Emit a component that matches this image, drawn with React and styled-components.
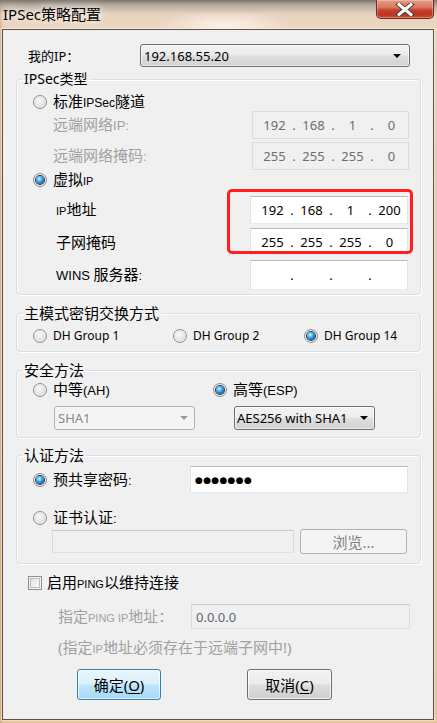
import React from 'react';
import styled, { createGlobalStyle } from 'styled-components';

const GlobalStyle = createGlobalStyle`
  html, body { margin: 0; padding: 0; }
  body {
    width: 437px; height: 723px; overflow: hidden;
    font-family: "Noto Sans", "Noto Sans CJK SC", sans-serif;
    background:
      linear-gradient(180deg, rgba(118,112,108,0.95) 0px, rgba(150,140,132,0.6) 5px, rgba(220,205,190,0) 14px),
      radial-gradient(ellipse 70px 14px at 225px 25px, rgba(255,244,232,0.95), rgba(255,244,232,0)),
      linear-gradient(90deg, rgba(190,120,80,0.35) 0px, rgba(190,120,80,0) 3px),
      linear-gradient(180deg, #e4d2c0 0, #ead5bf 28px, #e7c9a9 200px, #e5c39f 723px);
  }
  * { box-sizing: border-box; }
`;

const Window = styled.div`
  width: 437px; height: 723px;
  display: flex; flex-direction: column;
`;

const TitleBar = styled.div`
  height: 29px; flex: none;
  display: flex; justify-content: space-between; align-items: flex-start;
`;

const Title = styled.div`
  padding-left: 3px;
  font-size: 15px; line-height: 28px; color: #000;
  text-shadow: 0 0 6px rgba(255,255,255,0.9), 0 0 12px rgba(255,255,255,0.7);
`;

const CloseButton = styled.div`
  width: 58px; height: 19px; margin-right: 3px;
  border: 1px solid #6e2a1f; border-top: none; border-radius: 0 0 5px 5px;
  background: linear-gradient(180deg, #e49a86 0%, #d97a62 40%, #c8402a 56%, #bb3420 80%, #cc5034 100%);
  box-shadow: inset 0 0 0 1px rgba(255,255,255,0.3);
  display: flex; align-items: center; justify-content: center;
`;

const Client = styled.div`
  margin-left: 2px; width: 432px; height: 691px;
  border: 1px solid #5a5148; background: #f0f0f0;
  box-shadow: 0 0 0 1px rgba(255,255,255,0.45);
  display: flex; flex-direction: column;
`;

const MyIpRow = styled.div`
  margin-top: 14px; height: 23px; padding-left: 25px;
  display: flex; align-items: center;
`;

const Label = styled.span`
  flex: ${p => (p.$w ? `0 0 ${p.$w}px` : '0 1 auto')};
  font-size: ${p => p.$size || 15}px; line-height: 18px; white-space: nowrap;
  color: ${p => (p.$disabled ? '#a0a0a0' : '#000')};
`;

const Lat = styled.span`
  font-family: "Liberation Sans", "DejaVu Sans", sans-serif;
  font-size: ${p => p.$size || 11}px;
`;

const Select = styled.div`
  flex: none;
  width: ${p => p.$w}px; height: ${p => p.$h || 23}px;
  border: 1px solid ${p => (p.$disabled ? '#adb2b5' : '#707070')}; border-radius: 3px;
  background: ${p => (p.$disabled ? '#f4f4f4' : 'linear-gradient(180deg, #f3f3f3 0%, #ececec 48%, #dedede 52%, #d2d2d2 100%)')};
  box-shadow: ${p => (p.$disabled ? 'none' : 'inset 0 0 0 1px rgba(255,255,255,0.6)')};
  display: flex; align-items: center; justify-content: space-between;
  padding: 0 ${p => p.$pr || 7}px 0 ${p => p.$pl || 3}px;
  font-size: 13px; color: ${p => (p.$disabled ? '#8a8a8a' : '#000')};
`;

const Arrow = styled.span`
  width: 0; height: 0;
  border-left: 4px solid transparent; border-right: 4px solid transparent;
  border-top: 4px solid ${p => (p.$disabled ? '#9a9a9a' : '#000')};
`;

const Group = styled.fieldset`
  margin: ${p => p.$mt}px 12px 0 13px; padding: 0; min-width: 0;
  border: 1px solid #d5dfe5; border-radius: 4px;
  box-shadow: inset 1px 1px 0 #fff, 1px 1px 0 #fff;
`;

const Legend = styled.legend`
  margin-left: 5px; padding: 0 2px;
  font-size: ${p => p.$size || 15}px; line-height: 16px; color: #000;
`;

const GroupBody = styled.div`
  display: flex; flex-direction: column;
  padding: 0 0 ${p => p.$pb}px 0;
`;

const RadioRow = styled.div`
  margin-top: ${p => p.$mt || 0}px; height: ${p => p.$h || 18}px;
  padding-left: 16px;
  display: flex; align-items: center;
`;

const RadioItem = styled.label`
  flex: ${p => (p.$w ? `0 0 ${p.$w}px` : '0 1 auto')};
  display: flex; align-items: center; gap: 6px;
  font-size: ${p => p.$size || 15}px; line-height: 18px; color: #000; white-space: nowrap;
`;

const Radio = styled.span`
  flex: none; width: 14px; height: 14px; border-radius: 50%;
  border: 1px solid #8c8e90;
  background: radial-gradient(circle at 45% 40%, #fbfbfb 0%, #e6e6e6 45%, #c8c8c8 100%);
  box-shadow: inset 0 0 0 1px rgba(255,255,255,0.6);
  display: flex; align-items: center; justify-content: center;
  &::after {
    content: ''; display: ${p => (p.$checked ? 'block' : 'none')};
    width: 8px; height: 8px; border-radius: 50%;
    background: radial-gradient(circle at 40% 35%, #d6f2ff 0%, #4fb2ee 35%, #166ab5 68%, #0b2f55 100%);
    box-shadow: 0 0 0 1px #233e5a;
  }
`;

const FieldRow = styled.div`
  margin-top: ${p => p.$mt || 0}px; height: ${p => p.$h}px;
  padding-left: ${p => p.$pl}px;
  display: flex; align-items: center; justify-content: space-between;
`;

const IpBox = styled.div`
  flex: none;
  width: ${p => p.$w}px; height: ${p => p.$h}px; margin-right: ${p => p.$mr}px;
  border: 1px solid;
  border-color: ${p => (p.$enabled ? '#b8bac0 #e2e3ea #e3e9ef #e2e3ea' : '#dcdcdc')};
  background: ${p => (p.$enabled ? '#fff' : '#f0f0f0')};
  padding-left: ${p => p.$pl || 6}px;
  display: grid; grid-template-columns: 31px 8px 31px 8px 31px 8px 31px;
  align-items: center; justify-items: center; align-content: center;
  font-size: 13px; line-height: 16px;
  color: ${p => (p.$enabled ? '#000' : '#6d6d6d')};
`;

const HighlightArea = styled.div`
  position: relative;
  display: flex; flex-direction: column;
  margin-top: 7px;
`;

const Highlight = styled.div`
  position: absolute; left: 210px; top: -7px; width: 186px; height: 65px;
  border: 3px solid #ff1f1f; border-radius: 5px;
  pointer-events: none;
`;

const TextInput = styled.div`
  flex: none;
  width: ${p => p.$w}px; height: ${p => p.$h}px; margin-right: ${p => p.$mr || 0}px;
  border: 1px solid;
  border-color: ${p => (p.$enabled ? '#b8bac0 #e2e3ea #e3e9ef #e2e3ea' : '#c6c8cc #d9dbde #dfe1e4 #d9dbde')};
  background: ${p => (p.$enabled ? '#fff' : '#f0f0f0')};
  display: flex; align-items: center; padding-left: 4px;
  font-size: 13px; color: ${p => p.$color || '#000'};
`;

const Dots = styled.span`
  font-family: "DejaVu Sans", sans-serif; font-size: 9px; letter-spacing: 0.3px; color: #000;
`;

const SecRow = styled.div`
  margin-top: ${p => p.$mt}px; height: ${p => p.$h}px;
  padding-left: ${p => p.$pl}px;
  display: flex; align-items: center; gap: ${p => p.$gap || 0}px;
`;

const PushButton = styled.div`
  flex: none;
  width: ${p => p.$w}px; height: ${p => p.$h}px;
  border: 1px solid ${p => (p.$focused ? '#3c7fb1' : p.$disabled ? '#adb2b5' : '#707070')};
  border-radius: 3px;
  background: ${p => (p.$focused
    ? 'linear-gradient(180deg, #eaf6fd 0%, #d9f0fc 48%, #bee6fd 52%, #a7d9f5 100%)'
    : p.$disabled ? '#f4f4f4'
    : 'linear-gradient(180deg, #f2f2f2 0%, #ebebeb 48%, #dddddd 52%, #cfcfcf 100%)')};
  box-shadow: ${p => (p.$disabled ? 'none' : 'inset 0 0 0 1px rgba(255,255,255,0.7)')};
  display: flex; align-items: center; justify-content: center;
  font-size: 15px; line-height: 18px;
  color: ${p => (p.$disabled ? '#838383' : '#000')};
`;

const U = styled.span`
  text-decoration: underline; text-underline-offset: 2px;
`;

const CheckRow = styled.div`
  margin-top: 10px; height: 18px; padding-left: 25px;
  display: flex; align-items: center; gap: 5px;
  font-size: 15px; line-height: 18px; color: #000;
`;

const Checkbox = styled.span`
  flex: none; width: 14px; height: 14px;
  border: 1px solid #8f8f8f;
  background: linear-gradient(135deg, #dcdcdc 0%, #f2f2f2 60%, #fbfbfb 100%);
  box-shadow: inset 0 0 0 1px #f4f4f4, inset 0 0 0 2px #b7bcc2;
`;

const ButtonRow = styled.div`
  margin-top: 13px; padding-left: 74px;
  display: flex; gap: 86px;
`;

function IpField({ octets, enabled, w = 158, h = 28, mr = 12, pl = 6 }) {
  const cells = [];
  octets.forEach((o, i) => {
    cells.push(<span key={`o${i}`}>{o}</span>);
    if (i < 3) cells.push(<span key={`d${i}`}>.</span>);
  });
  return (
    <IpBox $enabled={enabled} $w={w} $h={h} $mr={mr} $pl={pl}>
      {cells}
    </IpBox>
  );
}

function CloseIcon() {
  return (
    <svg width="20" height="13" viewBox="0 0 20 13">
      <path d="M4 1.5 L16 11.5 M16 1.5 L4 11.5" stroke="#4a3a36" strokeWidth="5" strokeLinecap="square" fill="none" />
      <path d="M4 1.5 L16 11.5 M16 1.5 L4 11.5" stroke="#ffffff" strokeWidth="3" strokeLinecap="square" fill="none" />
    </svg>
  );
}

export default function App() {
  return (
    <>
      <GlobalStyle />
      <Window>
        <TitleBar>
          <Title>IPSec策略配置</Title>
          <CloseButton><CloseIcon /></CloseButton>
        </TitleBar>
        <Client>
          <MyIpRow>
            <Label $w={112} $size={13}>我的IP：</Label>
            <Select $w={270} $pr={8}>
              <span>192.168.55.20</span>
              <Arrow />
            </Select>
          </MyIpRow>

          <Group $mt={4}>
            <Legend $size={14}>IPSec类型</Legend>
            <GroupBody $pb={4}>
              <RadioRow $mt={6}>
                <RadioItem><Radio /><span>标准<Lat $size={12}>IPSec</Lat>隧道</span></RadioItem>
              </RadioRow>
              <FieldRow $h={28} $pl={36}>
                <Label $disabled>远端网络<Lat $size={13}>IP:</Lat></Label>
                <IpField octets={['192', '168', '1', '0']} w={157} mr={11} />
              </FieldRow>
              <FieldRow $h={28} $mt={3} $pl={36}>
                <Label $disabled>远端网络掩码<Lat $size={13}>:</Lat></Label>
                <IpField octets={['255', '255', '255', '0']} w={157} mr={11} />
              </FieldRow>
              <RadioRow $mt={1}>
                <RadioItem><Radio $checked /><span>虚拟<Lat>IP</Lat></span></RadioItem>
              </RadioRow>
              <HighlightArea>
                <FieldRow $h={28} $pl={39}>
                  <Label><Lat>IP</Lat>地址</Label>
                  <IpField enabled octets={['192', '168', '1', '200']} />
                </FieldRow>
                <FieldRow $h={27} $mt={4} $pl={39}>
                  <Label>子网掩码</Label>
                  <IpField enabled h={27} octets={['255', '255', '255', '0']} />
                </FieldRow>
                <Highlight />
              </HighlightArea>
              <FieldRow $h={30} $mt={5} $pl={39}>
                <Label><Lat $size={13}>WINS </Lat>服务器<Lat $size={13}>:</Lat></Label>
                <IpField enabled h={30} octets={['', '', '', '']} />
              </FieldRow>
            </GroupBody>
          </Group>

          <Group $mt={10}>
            <Legend>主模式密钥交换方式</Legend>
            <GroupBody $pb={6}>
              <RadioRow $mt={6}>
                <RadioItem $w={140} $size={12}><Radio /><span>DH Group 1</span></RadioItem>
                <RadioItem $w={131} $size={12}><Radio /><span>DH Group 2</span></RadioItem>
                <RadioItem $size={12}><Radio $checked /><span>DH Group 14</span></RadioItem>
              </RadioRow>
            </GroupBody>
          </Group>

          <Group $mt={10}>
            <Legend>安全方法</Legend>
            <GroupBody $pb={7}>
              <RadioRow $mt={3}>
                <RadioItem $w={180}><Radio /><span>中等<Lat $size={13}>(AH)</Lat></span></RadioItem>
                <RadioItem><Radio $checked /><span>高等<Lat $size={13}>(ESP)</Lat></span></RadioItem>
              </RadioRow>
              <SecRow $mt={7} $h={24} $pl={37} $gap={39}>
                <Select $w={141} $h={24} $disabled $pr={6}>
                  <span>SHA1</span>
                  <Arrow $disabled />
                </Select>
                <Select $w={141} $h={24} $pl={2} $pr={6}>
                  <span>AES256 with SHA1</span>
                  <Arrow />
                </Select>
              </SecRow>
            </GroupBody>
          </Group>

          <Group $mt={9}>
            <Legend>认证方法</Legend>
            <GroupBody $pb={9}>
              <FieldRow $h={27} $mt={3} $pl={16}>
                <RadioItem><Radio $checked /><span>预共享密码<Lat $size={13}>:</Lat></span></RadioItem>
                <TextInput $enabled $w={218} $h={27} $mr={12}>
                  <Dots>●●●●●●●</Dots>
                </TextInput>
              </FieldRow>
              <RadioRow $mt={16}>
                <RadioItem><Radio /><span>证书认证<Lat $size={13}>:</Lat></span></RadioItem>
              </RadioRow>
              <SecRow $mt={2} $h={25} $pl={35} $gap={6}>
                <TextInput $w={242} $h={23} />
                <PushButton $w={107} $h={25} $disabled>浏览...</PushButton>
              </SecRow>
            </GroupBody>
          </Group>

          <CheckRow>
            <Checkbox />
            <span>启用<Lat>PING</Lat>以维持连接</span>
          </CheckRow>

          <FieldRow $h={25} $mt={12} $pl={55}>
            <Label $disabled>指定<Lat>PING IP</Lat>地址：</Label>
            <TextInput $w={219} $h={25} $mr={23} $color="#5f6670">0.0.0.0</TextInput>
          </FieldRow>

          <FieldRow $h={16} $mt={11} $pl={55}>
            <Label $disabled>(指定<Lat>IP</Lat>地址必须存在于远端子网中!)</Label>
          </FieldRow>

          <ButtonRow>
            <PushButton $w={84} $h={31} $focused>确定(<U>O</U>)</PushButton>
            <PushButton $w={85} $h={31}>取消(<U>C</U>)</PushButton>
          </ButtonRow>
        </Client>
      </Window>
    </>
  );
}
